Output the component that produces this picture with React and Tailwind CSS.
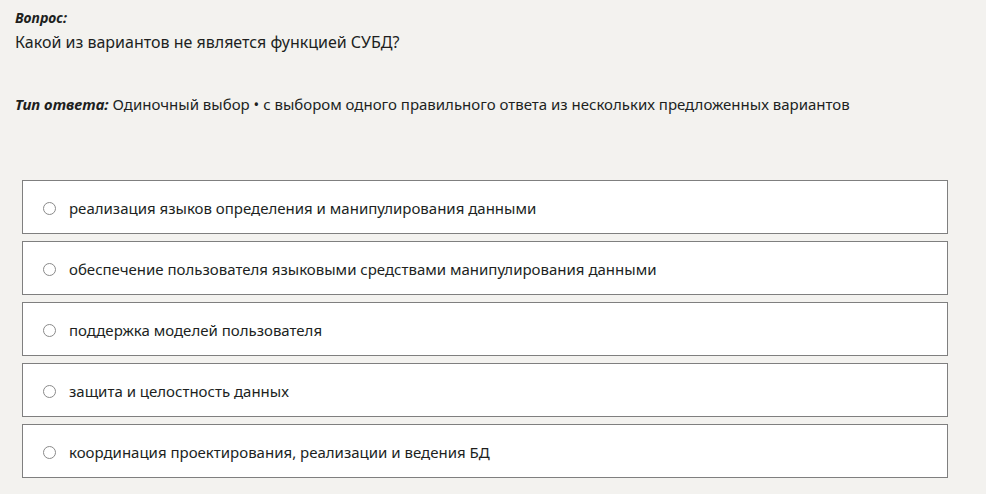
import React from "react";

const options = [
  "реализация языков определения и манипулирования данными",
  "обеспечение пользователя языковыми средствами манипулирования данными",
  "поддержка моделей пользователя",
  "защита и целостность данных",
  "координация проектирования, реализации и ведения БД",
];

export default function App() {
  return (
    <div
      className="w-[986px] h-[494px] bg-[#f3f2ef] text-[#201f1e] overflow-hidden"
      style={{ fontFamily: '"Noto Sans", "Open Sans", sans-serif' }}
    >
      <div className="pl-[15px] pt-[8px]">
        <div className="text-[14px] leading-[20px] font-bold italic">Вопрос:</div>
        <div className="text-[16px] leading-[24px] mt-[2px]">
          Какой из вариантов не является функцией СУБД?
        </div>
        <div className="text-[15px] leading-[20px] mt-[40px]">
          <span className="font-bold italic">Тип ответа:</span> Одиночный выбор • с выбором одного правильного ответа из нескольких предложенных вариантов
        </div>
      </div>
      <div className="ml-[22px] w-[926px] mt-[66px] flex flex-col gap-[7px]">
        {options.map((o) => (
          <div
            key={o}
            className="h-[54px] bg-white border border-[#7f7f7f] flex items-center pl-[20px] pt-[2px]"
          >
            <span className="w-[13px] h-[13px] rounded-full border-[1.5px] border-[#8a8a8a] bg-white shrink-0"></span>
            <span className="ml-[13px] text-[15px] leading-[20px]">{o}</span>
          </div>
        ))}
      </div>
    </div>
  );
}
